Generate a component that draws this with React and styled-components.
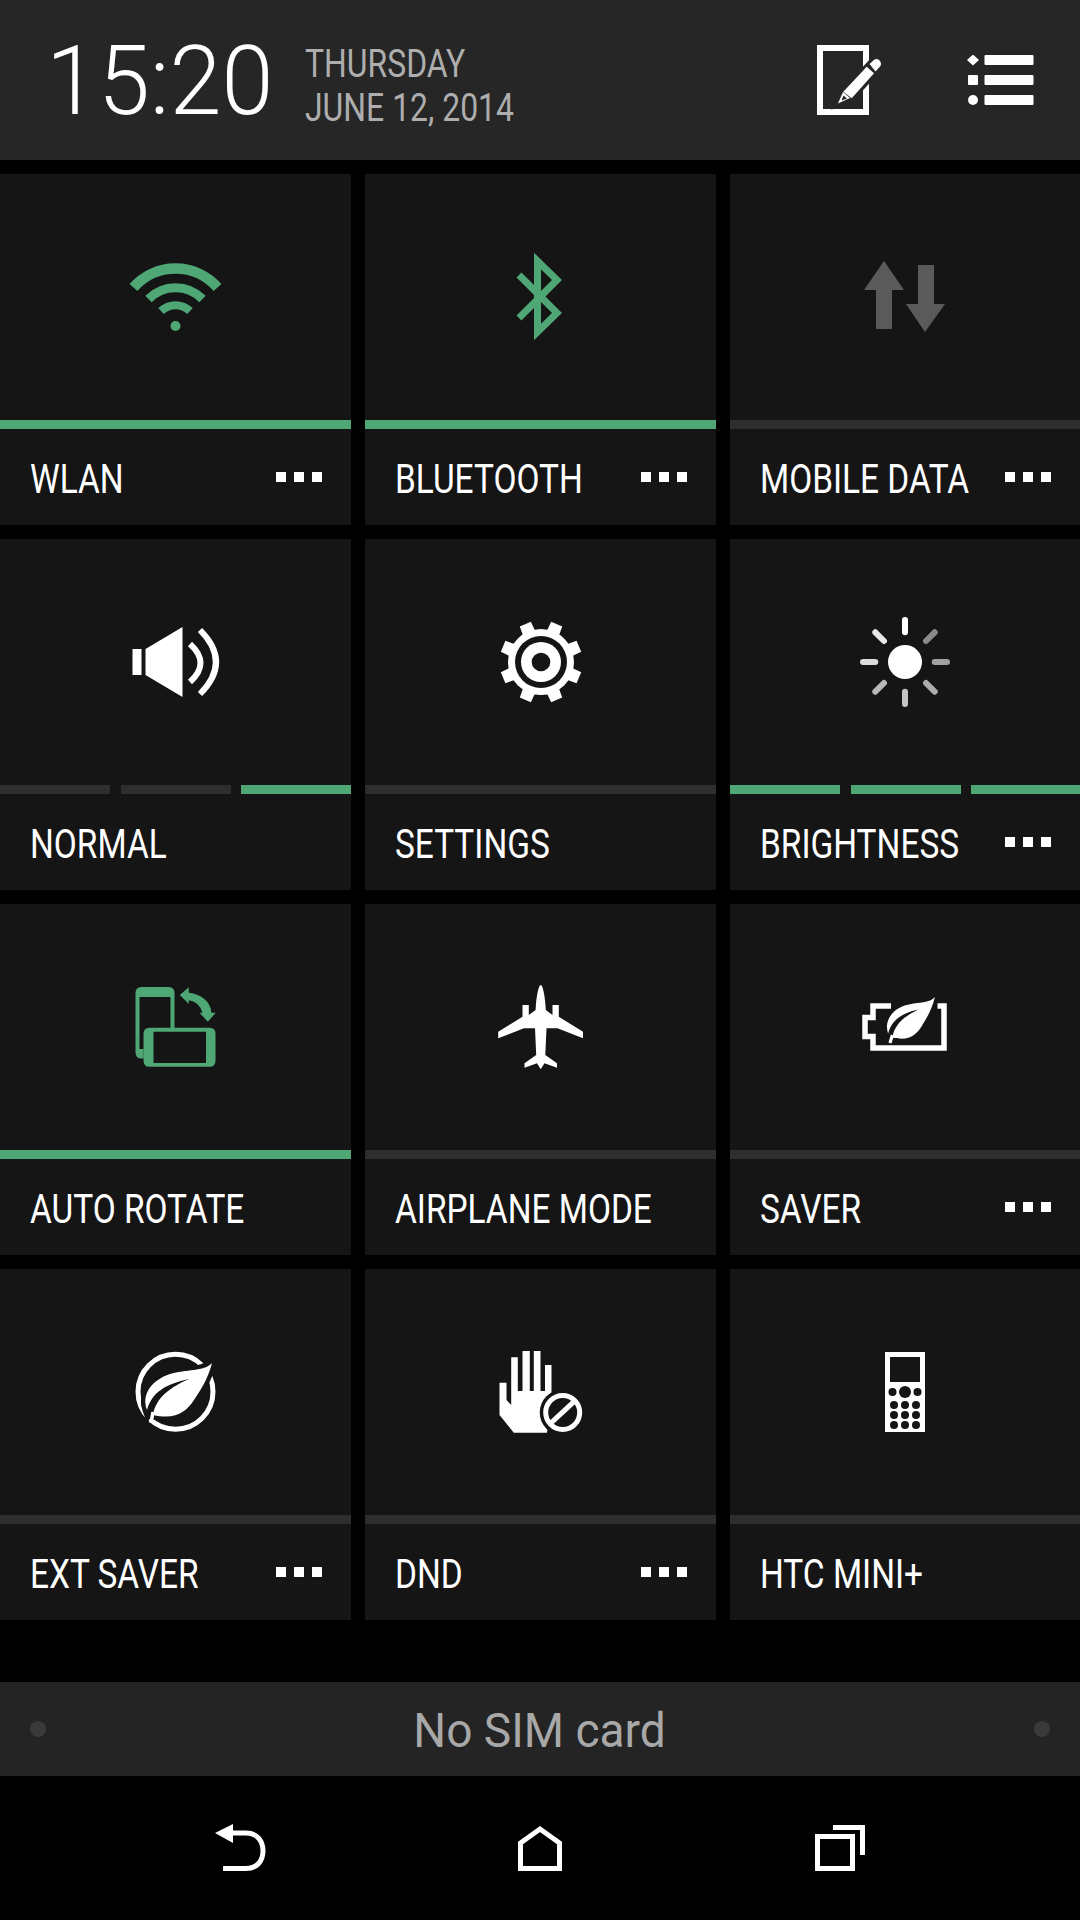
import React from "react";
import styled, { createGlobalStyle } from "styled-components";

const GREEN = "#4ea774";
const BG = "#151515";
const HEAD = "#262626";

const GlobalStyle = createGlobalStyle`
  html, body {
    margin: 0;
    padding: 0;
    background: #000;
    font-family: Roboto, "Liberation Sans", sans-serif;
  }
`;

const Screen = styled.div`
  width: 1080px;
  height: 1920px;
  background: #000;
  display: flex;
  flex-direction: column;
  overflow: hidden;
`;

const Header = styled.header`
  height: 160px;
  background: ${HEAD};
  display: flex;
  align-items: center;
  padding-left: 46px;
  padding-right: 45px;
`;

const Clock = styled.div`
  font-size: 96px;
  font-weight: 300;
  line-height: 1;
  color: #fff;
  width: 259px;
  flex-shrink: 0;
  white-space: nowrap;
  margin-top: 2px;
  transform: scaleX(0.975);
  transform-origin: left center;
`;

const DateBlock = styled.div`
  display: flex;
  flex-direction: column;
  flex-grow: 1;
  margin-top: 12px;
`;

const DateLine = styled.div`
  font-size: 38px;
  line-height: 44px;
  color: #aeaeae;
  white-space: nowrap;
  transform: scaleX(0.84);
  transform-origin: left center;
`;

const HeaderIcons = styled.div`
  display: flex;
  align-items: center;
  gap: 82px;
  color: #fff;
`;

const Grid = styled.main`
  display: grid;
  grid-template-columns: 351px 351px 350px;
  grid-auto-rows: 351px;
  gap: 14px;
  padding-top: 14px;
`;

const TileBox = styled.section`
  background: ${BG};
  display: flex;
  flex-direction: column;
`;

const IconArea = styled.div`
  height: 246px;
  display: flex;
  align-items: center;
  justify-content: center;
  color: ${(p) => p.$tone};
`;

const Bar = styled.div`
  height: 9px;
  display: flex;
  overflow: hidden;
`;

const BarSegment = styled.div`
  flex: ${(p) => (p.$split ? "0 0 110px" : "1")};
  background: ${(p) => (p.$on ? GREEN : "#2d2e2f")};
  & + & {
    margin-left: 11px;
  }
  & + & + & {
    margin-left: 10px;
  }
`;

const Footer = styled.div`
  flex-grow: 1;
  display: flex;
  align-items: center;
  padding-left: 30px;
  padding-right: 29px;
`;

const Label = styled.span`
  flex: 1;
  min-width: 0;
  font-size: 41px;
  line-height: 1;
  color: #fff;
  white-space: nowrap;
  transform: scaleX(0.815);
  transform-origin: left center;
  margin-top: 4px;
`;

const MoreDots = styled.div`
  display: flex;
  flex-shrink: 0;
  gap: 8px;
`;

const MoreDot = styled.i`
  display: block;
  width: 10px;
  height: 10px;
  background: #fff;
`;

const StatusBar = styled.div`
  margin-top: 62px;
  height: 94px;
  background: #242424;
  display: flex;
  align-items: center;
  justify-content: space-between;
  padding: 0 30px;
`;

const StatusDot = styled.i`
  display: block;
  width: 16px;
  height: 16px;
  border-radius: 50%;
  background: #3a3a3a;
`;

const StatusText = styled.div`
  font-size: 48px;
  line-height: 1;
  color: #a8a8a8;
  transform: scaleX(0.96);
  margin-top: 3px;
`;

const NavBar = styled.nav`
  height: 144px;
  display: grid;
  grid-template-columns: repeat(3, 300px);
  justify-content: center;
  align-items: center;
  justify-items: center;
  color: #fff;
`;

const Box = ({ children }) => (
  <svg width="100" height="100" viewBox="0 0 100 100" fill="currentColor">
    {children}
  </svg>
);

const LEAF =
  "M86 21C78 30 60 27 44 32C26 38 15 52 21 68C26 50 40 42 63 37C45 45 30 55 27 73C50 78 60 70 68 58C76 46 82 36 86 21Z";

const Wifi = () => (
  <Box>
    <g fill="none" stroke="currentColor">
      <path d="M7.500 40.500A56 56 0 0 1 91.500 40.500" strokeWidth="10.500" />
      <path d="M22.500 52A38 38 0 0 1 76.500 52" strokeWidth="9" />
      <path d="M35 64A21 21 0 0 1 64 64" strokeWidth="8" />
    </g>
    <circle cx="49.500" cy="79" r="5" />
  </Box>
);

const Bluetooth = () => (
  <Box>
    <path
      d="M28 28L66 66L46.500 85V14L66 33L28 71"
      fill="none"
      stroke="currentColor"
      strokeWidth="7"
    />
  </Box>
);

const DataArrows = () => (
  <Box>
    <path d="M29 14L9 43H21V82H37V43H49Z" />
    <path d="M70 85L51 57H63V18H79V57H90Z" />
  </Box>
);

const Speaker = () => (
  <Box>
    <rect x="6.500" y="37" width="9" height="26" />
    <path d="M19.500 37L56.500 15V85L19.500 63Z" />
    <g fill="none" stroke="currentColor" strokeWidth="6">
      <path d="M64 32Q85 51 64 70" />
      <path d="M74 18Q106 50 74 82" />
    </g>
  </Box>
);

const Gear = () => (
  <Box>
    {[0, 1, 2, 3, 4, 5, 6, 7].map((n) => (
      <path
        key={n}
        d="M43.500 20L44 9H56L56.500 20Z"
        transform={`rotate(${22.5 + n * 45} 50 50) `}
      />
    ))}
    <circle cx="50" cy="50" r="33" />
    <circle cx="50" cy="50" r="26" fill={BG} />
    <circle cx="50" cy="50" r="20" />
    <circle cx="50" cy="50" r="9.300" fill={BG} />
  </Box>
);

const Sun = () => {
  const shades = [1, 0.5, 0.6, 0.65, 0.75, 0.7, 0.85, 0.9];
  return (
    <Box>
      <circle cx="50" cy="50" r="17" />
      {shades.map((o, n) => (
        <path
          key={n}
          d="M50 20.300V8"
          stroke="currentColor"
          strokeWidth="6"
          strokeLinecap="round"
          opacity={o}
          transform={`rotate(${n * 45} 50 50)`}
        />
      ))}
    </Box>
  );
};

const Rotate = () => (
  <Box>
    <path d="M15.500 10H42.500Q48.500 10 48.500 16V51H44.500V20H13.500V72H17.500V81.500H15.500Q9.500 81.500 9.500 75.500V16Q9.500 10 15.500 10Z" />
    <path
      fillRule="evenodd"
      d="M23.500 50.700H83.500Q89.500 50.700 89.500 56.700V83.700Q89.500 89.700 83.500 89.700H23.500Q17.500 89.700 17.500 83.700V56.700Q17.500 50.700 23.500 50.700ZM27.500 54.700V86H80V54.700Z"
    />
    <path d="M53.800 18L62.800 10.300V27Z" />
    <path d="M81.800 44.700L73.500 35.700H89.800Z" />
    <path d="M62 15.500Q84 19 85.500 36H76.500Q74 25 62 23Z" />
  </Box>
);

const Airplane = () => (
  <Box>
    <path d="M49.700 8C52 8 54.200 20 54.800 33L61.500 38V28H67.800V39.700L92 54.700V61.300L66.500 51.300H55.500L54.300 78L66 86.300V90.700L53.500 86.300L49.700 92.300L46 86.300L33.500 90.700V86.300L45.200 78L44 51.300H33L7.200 61.300V54.700L31.500 39.700V28H37.800V38L44.600 33C45.200 20 47.500 8 49.700 8Z" />
  </Box>
);

const BatterySaver = () => (
  <Box>
    <path
      d="M36 29H18V40.500H10V59.500H18V71H89V29H82.500"
      fill="none"
      stroke="currentColor"
      strokeWidth="5.500"
    />
    <g transform="translate(18 3.600) scale(0.72 0.78)">
      <path d={LEAF} stroke={BG} strokeWidth="8" fill={BG} />
      <path d={LEAF} />
      <path d="M27 70L23.500 80" stroke="currentColor" strokeWidth="4.500" />
    </g>
  </Box>
);

const ExtSaver = () => (
  <Box>
    <circle cx="49.500" cy="49.700" r="37.500" fill="none" stroke="currentColor" strokeWidth="5" />
    <path d={LEAF} stroke={BG} strokeWidth="9" fill={BG} />
    <path d={LEAF} />
    <path d="M27 70L25 81" stroke="currentColor" strokeWidth="3.500" />
  </Box>
);

const Hand = () => (
  <Box>
    <path d="M8.500 40.700H15.500V58L20.200 63V15.300H26.800V49H31.500V9H38.800V49H42.800V9H49.500V49H54V23H60.500V60L56 90.700H22.800L8.500 73Z" />
    <circle cx="71.700" cy="70.500" r="23" fill={BG} />
    <circle cx="71.700" cy="70.500" r="17" fill="none" stroke="currentColor" strokeWidth="5" />
    <path d="M59.500 81.300L83 59.700" stroke="currentColor" strokeWidth="5" />
  </Box>
);

const MiniPhone = () => (
  <Box>
    <rect x="30" y="10" width="40" height="80" />
    <rect x="35" y="15" width="30" height="25" fill={BG} />
    <g fill={BG}>
      <circle cx="37.500" cy="50" r="4" />
      <circle cx="50" cy="50" r="6" />
      <circle cx="62.500" cy="50" r="4" />
      {[63, 73, 83].map((y) =>
        [39, 50, 61].map((x) => <circle key={`${x}-${y}`} cx={x} cy={y} r="4" />)
      )}
    </g>
  </Box>
);

const NoteIcon = () => (
  <svg width="70" height="80" viewBox="0 0 70 80" fill="currentColor">
    <rect x="5" y="8" width="46" height="64" fill="none" stroke="currentColor" strokeWidth="6" />
    <path d="M54.500 24L60 18L67 25L36.700 58.300L22.300 64L28.300 51.700Z" fill={HEAD} stroke={HEAD} strokeWidth="6" />
    <path d="M51.700 26.700L59 33.300L36.700 58.300L28.300 51.700Z" />
    <path d="M54.500 24L59.500 19.500Q63 18 65 21Q67 24 65 26.500L60.500 31.500Z" />
    <path d="M28 52L35 58L23 63.500Z" />
    <path d="M28.500 55.500L32 58.500L26.500 60.500Z" fill={HEAD} />
  </svg>
);

const ListIcon = () => (
  <svg width="68" height="50" viewBox="0 0 68 50" fill="currentColor">
    <path d="M6 -0.500L12 5L6 10.500L0 5Z" />
    <rect x="1" y="20" width="10" height="10" rx="1" />
    <circle cx="6" cy="45" r="5" />
    <rect x="17.500" y="0" width="49" height="10" rx="1" />
    <rect x="17.500" y="20" width="49" height="10" rx="1" />
    <rect x="17.500" y="40" width="49" height="10" rx="1" />
  </svg>
);

const NavSvg = ({ children }) => (
  <svg width="60" height="60" viewBox="0 0 60 60" fill="none" stroke="currentColor" strokeWidth="5">
    {children}
  </svg>
);

const tiles = [
  { label: "WLAN", Icon: Wifi, tone: GREEN, bar: [1], more: true },
  { label: "BLUETOOTH", Icon: Bluetooth, tone: GREEN, bar: [1], more: true },
  { label: "MOBILE DATA", Icon: DataArrows, tone: "#5a5a5a", bar: [0], more: true },
  { label: "NORMAL", Icon: Speaker, tone: "#fff", bar: [0, 0, 1] },
  { label: "SETTINGS", Icon: Gear, tone: "#fff", bar: [0] },
  { label: "BRIGHTNESS", Icon: Sun, tone: "#fff", bar: [1, 1, 1], more: true },
  { label: "AUTO ROTATE", Icon: Rotate, tone: GREEN, bar: [1] },
  { label: "AIRPLANE MODE", Icon: Airplane, tone: "#fff", bar: [0] },
  { label: "SAVER", Icon: BatterySaver, tone: "#fff", bar: [0], more: true },
  { label: "EXT SAVER", Icon: ExtSaver, tone: "#fff", bar: [0], more: true },
  { label: "DND", Icon: Hand, tone: "#fff", bar: [0], more: true },
  { label: "HTC MINI+", Icon: MiniPhone, tone: "#fff", bar: [0] },
];

const Tile = ({ label, Icon, tone, bar, more }) => (
  <TileBox>
    <IconArea $tone={tone}>
      <Icon />
    </IconArea>
    <Bar>
      {bar.map((on, i) => (
        <BarSegment key={i} $on={on} $split={bar.length > 1} />
      ))}
    </Bar>
    <Footer>
      <Label>{label}</Label>
      {more && (
        <MoreDots>
          <MoreDot />
          <MoreDot />
          <MoreDot />
        </MoreDots>
      )}
    </Footer>
  </TileBox>
);

const App = () => (
  <>
    <GlobalStyle />
    <Screen>
      <Header>
        <Clock>15:20</Clock>
        <DateBlock>
          <DateLine>THURSDAY</DateLine>
          <DateLine>JUNE 12, 2014</DateLine>
        </DateBlock>
        <HeaderIcons>
          <NoteIcon />
          <ListIcon />
        </HeaderIcons>
      </Header>
      <Grid>
        {tiles.map((t) => (
          <Tile key={t.label} {...t} />
        ))}
      </Grid>
      <StatusBar>
        <StatusDot />
        <StatusText>No SIM card</StatusText>
        <StatusDot />
      </StatusBar>
      <NavBar>
        <NavSvg>
          <path d="M5 15L23 6V25Z" fill="currentColor" stroke="none" />
          <path d="M22 15H36C48 15 53 24 53 33C53 44 46 50.500 36 50.500H13" />
        </NavSvg>
        <NavSvg>
          <path d="M10.500 50.500V25L30 11L49.500 25V50.500Z" />
        </NavSvg>
        <NavSvg>
          <rect x="7.500" y="18.500" width="35" height="32" />
          <path d="M23 9.500H52.500V37" />
        </NavSvg>
      </NavBar>
    </Screen>
  </>
);

export default App;
